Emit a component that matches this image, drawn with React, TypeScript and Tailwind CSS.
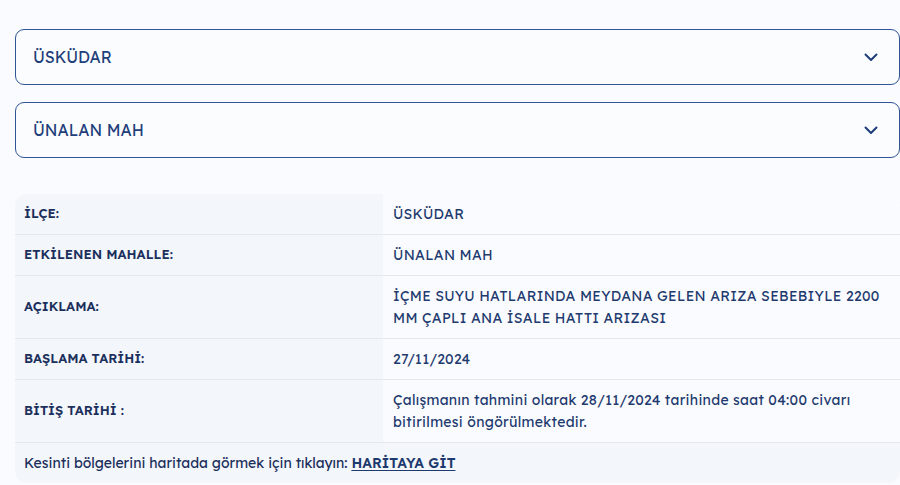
import React from 'react';

interface Row {
  label: string;
  value: string;
  tall?: boolean;
}

const rows: Row[] = [
  { label: 'İLÇE:', value: 'ÜSKÜDAR' },
  { label: 'ETKİLENEN MAHALLE:', value: 'ÜNALAN MAH' },
  {
    label: 'AÇIKLAMA:',
    value: 'İÇME SUYU HATLARINDA MEYDANA GELEN ARIZA SEBEBIYLE 2200 MM ÇAPLI ANA İSALE HATTI ARIZASI',
    tall: true,
  },
  { label: 'BAŞLAMA TARİHİ:', value: '27/11/2024' },
  {
    label: 'BİTİŞ TARİHİ :',
    value: 'Çalışmanın tahmini olarak 28/11/2024 tarihinde saat 04:00 civarı bitirilmesi öngörülmektedir.',
    tall: true,
  },
];

const Chevron = () => (
  <svg width="16" height="16" viewBox="0 0 16 16" fill="none" className="text-[#1d3d7a]">
    <path d="M2.5 5.5 8 11l5.5-5.5" stroke="currentColor" strokeWidth="2" strokeLinecap="round" strokeLinejoin="round" />
  </svg>
);

const SelectBox = ({ value }: { value: string }) => (
  <div className="flex h-[56px] items-center justify-between rounded-[9px] border border-[#2f5597] bg-[#fbfcfe] pl-[17px] pr-[20px]">
    <span className="text-[16px] text-[#1f3f7a]">{value}</span>
    <Chevron />
  </div>
);

export default function App() {
  return (
    <div
      className="min-h-[485px] w-[900px] overflow-hidden bg-[#f9fbfe] pl-[15px] pt-[29px]"
      style={{ fontFamily: 'Lexend, "Noto Sans", Inter, sans-serif' }}
    >
      <div className="flex w-[885px] flex-col gap-[17px]">
        <SelectBox value="ÜSKÜDAR" />
        <SelectBox value="ÜNALAN MAH" />
      </div>

      <div className="mt-[36px] w-[885px] overflow-hidden rounded-[12px] bg-[#f3f6fb]">
        {rows.map((r) => (
          <div key={r.label} className="flex border-b border-[#e4e7ec]">
            <div
              className={`flex w-[368px] shrink-0 items-center pl-[9px] text-[13px] font-semibold text-[#1b2f5c] ${
                r.tall ? 'h-[62px]' : 'h-[40px]'
              }`}
            >
              {r.label}
            </div>
            <div className="flex flex-1 items-center bg-[#f9fbfe] pl-[10px] pr-[10px] text-[14px] leading-[22px] tracking-[0.3px] text-[#1e3a6e]">
              {r.value}
            </div>
          </div>
        ))}
        <div className="flex h-[40px] items-center pl-[9px] text-[14px] text-[#1b2f5c]">
          Kesinti bölgelerini haritada görmek için tıklayın:&nbsp;
          <a href="#" className="font-semibold text-[#1e3a6e] underline underline-offset-2">
            HARİTAYA GİT
          </a>
        </div>
      </div>
    </div>
  );
}
